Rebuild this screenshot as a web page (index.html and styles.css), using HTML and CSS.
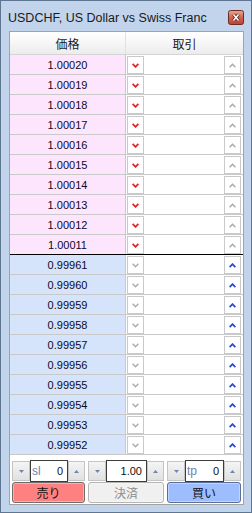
FILE: index.html
```html
<!DOCTYPE html>
<html lang="ja">
<head>
<meta charset="utf-8">
<title>USDCHF</title>
<link rel="stylesheet" href="styles.css">
</head>
<body>
<div class="window">
  <div class="titlebar">
    <span class="title">USDCHF, US Dollar vs Swiss Franc</span>
    <span class="close">
      <svg width="16" height="15" viewBox="0 0 16 15">
        <defs>
          <linearGradient id="cg" x1="0" y1="0" x2="0" y2="1">
            <stop offset="0" stop-color="#e9a996"/>
            <stop offset="0.5" stop-color="#d0644f"/>
            <stop offset="1" stop-color="#c0402f"/>
          </linearGradient>
        </defs>
        <rect x="0.5" y="0.5" width="15" height="14" rx="2" fill="url(#cg)" stroke="#6a2c25"/>
        <path d="M5.5 4.5 L10.5 10.5 M10.5 4.5 L5.5 10.5" stroke="#5a2018" stroke-width="3.2"/>
        <path d="M5.5 4.5 L10.5 10.5 M10.5 4.5 L5.5 10.5" stroke="#ffffff" stroke-width="1.6"/>
      </svg>
    </span>
  </div>
  <div class="panel">
    <div class="grid">
      <div class="head"><div class="c1">価格</div><div class="c2">取引</div></div>

      <div class="row ask"><div class="price">1.00020</div><div class="trade"><span class="tb dn on-red"></span><span class="tb up off"></span></div></div>
      <div class="row ask"><div class="price">1.00019</div><div class="trade"><span class="tb dn on-red"></span><span class="tb up off"></span></div></div>
      <div class="row ask"><div class="price">1.00018</div><div class="trade"><span class="tb dn on-red"></span><span class="tb up off"></span></div></div>
      <div class="row ask"><div class="price">1.00017</div><div class="trade"><span class="tb dn on-red"></span><span class="tb up off"></span></div></div>
      <div class="row ask"><div class="price">1.00016</div><div class="trade"><span class="tb dn on-red"></span><span class="tb up off"></span></div></div>
      <div class="row ask"><div class="price">1.00015</div><div class="trade"><span class="tb dn on-red"></span><span class="tb up off"></span></div></div>
      <div class="row ask"><div class="price">1.00014</div><div class="trade"><span class="tb dn on-red"></span><span class="tb up off"></span></div></div>
      <div class="row ask"><div class="price">1.00013</div><div class="trade"><span class="tb dn on-red"></span><span class="tb up off"></span></div></div>
      <div class="row ask"><div class="price">1.00012</div><div class="trade"><span class="tb dn on-red"></span><span class="tb up off"></span></div></div>
      <div class="row ask last"><div class="price">1.00011</div><div class="trade"><span class="tb dn on-red"></span><span class="tb up off"></span></div></div>

      <div class="row bid"><div class="price">0.99961</div><div class="trade"><span class="tb dn off"></span><span class="tb up on-blue"></span></div></div>
      <div class="row bid"><div class="price">0.99960</div><div class="trade"><span class="tb dn off"></span><span class="tb up on-blue"></span></div></div>
      <div class="row bid"><div class="price">0.99959</div><div class="trade"><span class="tb dn off"></span><span class="tb up on-blue"></span></div></div>
      <div class="row bid"><div class="price">0.99958</div><div class="trade"><span class="tb dn off"></span><span class="tb up on-blue"></span></div></div>
      <div class="row bid"><div class="price">0.99957</div><div class="trade"><span class="tb dn off"></span><span class="tb up on-blue"></span></div></div>
      <div class="row bid"><div class="price">0.99956</div><div class="trade"><span class="tb dn off"></span><span class="tb up on-blue"></span></div></div>
      <div class="row bid"><div class="price">0.99955</div><div class="trade"><span class="tb dn off"></span><span class="tb up on-blue"></span></div></div>
      <div class="row bid"><div class="price">0.99954</div><div class="trade"><span class="tb dn off"></span><span class="tb up on-blue"></span></div></div>
      <div class="row bid"><div class="price">0.99953</div><div class="trade"><span class="tb dn off"></span><span class="tb up on-blue"></span></div></div>
      <div class="row bid"><div class="price">0.99952</div><div class="trade"><span class="tb dn off"></span><span class="tb up on-blue"></span></div></div>
    </div>

    <div class="controls">
      <div class="spins">
        <div class="spin">
          <span class="sb sdn"></span>
          <span class="field"><span class="lbl">sl</span><span class="val">0</span></span>
          <span class="sb sup"></span>
        </div>
        <div class="spin">
          <span class="sb sdn"></span>
          <span class="field"><span class="lbl"></span><span class="val">1.00</span></span>
          <span class="sb sup"></span>
        </div>
        <div class="spin">
          <span class="sb sdn"></span>
          <span class="field"><span class="lbl">tp</span><span class="val">0</span></span>
          <span class="sb sup"></span>
        </div>
      </div>
      <div class="actions">
        <span class="act sell">売り</span>
        <span class="act close-pos">決済</span>
        <span class="act buy">買い</span>
      </div>
    </div>
  </div>
</div>
</body>
</html>
```
FILE: styles.css
```css
* { box-sizing: border-box; }
html, body { margin: 0; padding: 0; }
body { width: 252px; height: 513px; background: #c1d4ec; }

.window {
  width: 252px;
  height: 513px;
  border: 1px solid #5f7693;
  background: #c1d4ec;
  display: flex;
  flex-direction: column;
}

.titlebar {
  height: 30px;
  flex: none;
  display: flex;
  justify-content: space-between;
  align-items: flex-start;
  padding: 0 7px 0 7px;
}
.title {
  font-family: "Liberation Sans", Arial, sans-serif;
  font-size: 12.5px;
  line-height: 16px;
  padding-top: 9px;
  color: #1a1a1a;
  white-space: nowrap;
}
.close { margin-top: 9px; width: 16px; height: 15px; display: block; }
.close svg { display: block; }

.panel {
  flex: 1;
  margin: 0 7px 7px 8px;
  background: #ffffff;
  border: 1px solid #a3a3a3;
  display: flex;
  flex-direction: column;
}

.grid { display: flex; flex-direction: column; }

.head {
  height: 23px;
  display: flex;
  border-bottom: 1px solid #d5d5d5;
  background: linear-gradient(#ffffff 0%, #f7f7f7 45%, #ececec 100%);
  font-family: "Noto Sans CJK JP", "Noto Sans", sans-serif;
  font-size: 12px;
  color: #1a1a1a;
}
.head .c1 {
  width: 116px;
  border-right: 1px solid #e2e2e2;
  display: flex; align-items: center; justify-content: center;
}
.head .c2 {
  flex: 1;
  display: flex; align-items: center; justify-content: center;
}

.row {
  height: 20px;
  display: flex;
  border-bottom: 1px solid #c9c9c9;
}
.row.last { border-bottom-color: #000000; }

.price {
  width: 116px;
  border-right: 1px solid #c9c9c9;
  display: flex; align-items: center; justify-content: center;
  font-family: "Liberation Sans", Arial, sans-serif;
  font-size: 11px;
  color: #0a0a28;
}
.ask .price { background: #fee5fe; }
.bid .price { background: #d5e4fa; }

.trade {
  flex: 1;
  display: flex;
  justify-content: space-between;
  align-items: flex-start;
  padding: 1px 2px 0 1px;
  background: #ffffff;
}
.tb {
  width: 17px;
  height: 18px;
  border: 1px solid #c9c9c9;
  background: #ffffff;
  display: block;
  background-repeat: no-repeat;
  background-position: center;
}
.tb.dn.on-red {
  background-image: url("data:image/svg+xml,%3Csvg xmlns='http://www.w3.org/2000/svg' width='7' height='5'%3E%3Cpolyline points='0.6,0.8 3.5,3.8 6.4,0.8' fill='none' stroke='%23e0242c' stroke-width='1.8'/%3E%3C/svg%3E");
}
.tb.dn.off {
  background-image: url("data:image/svg+xml,%3Csvg xmlns='http://www.w3.org/2000/svg' width='7' height='5'%3E%3Cpolyline points='0.6,0.8 3.5,3.8 6.4,0.8' fill='none' stroke='%23a9a9a9' stroke-width='1.4'/%3E%3C/svg%3E");
}
.tb.up.off {
  background-image: url("data:image/svg+xml,%3Csvg xmlns='http://www.w3.org/2000/svg' width='7' height='5'%3E%3Cpolyline points='0.6,4.2 3.5,1.2 6.4,4.2' fill='none' stroke='%23a9a9a9' stroke-width='1.4'/%3E%3C/svg%3E");
}
.tb.up.on-blue {
  background-image: url("data:image/svg+xml,%3Csvg xmlns='http://www.w3.org/2000/svg' width='7' height='5'%3E%3Cpolyline points='0.6,4.2 3.5,1.2 6.4,4.2' fill='none' stroke='%232848d8' stroke-width='1.8'/%3E%3C/svg%3E");
}

.controls {
  padding: 5px 2px 1px 2px;
  display: flex;
  flex-direction: column;
}
.spins, .actions {
  display: grid;
  grid-template-columns: 73px 76px 74px;
  column-gap: 3px;
}
.spins { height: 22px; }
.spin { display: flex; align-items: center; }
.sb {
  width: 18px;
  height: 20px;
  flex: none;
  border: 1px solid #c4c4c4;
  background-color: #e9e9e9;
  background-image: url("data:image/svg+xml,%3Csvg xmlns='http://www.w3.org/2000/svg' width='5' height='3'%3E%3Cpolygon points='0,0 5,0 2.5,3' fill='%236f83b0'/%3E%3C/svg%3E"), linear-gradient(#f4f4f4, #e1e1e1);
  background-repeat: no-repeat;
  background-position: center;
}
.sb.sup {
  width: 17px;
  background-image: url("data:image/svg+xml,%3Csvg xmlns='http://www.w3.org/2000/svg' width='5' height='3'%3E%3Cpolygon points='0,3 5,3 2.5,0' fill='%236f83b0'/%3E%3C/svg%3E"), linear-gradient(#f4f4f4, #e1e1e1);
}
.field {
  flex: 1;
  height: 22px;
  border: 1px solid #3c3c3c;
  background: #ffffff;
  display: flex;
  align-items: center;
  justify-content: space-between;
  padding: 0 4px 0 1px;
  font-family: "Liberation Sans", Arial, sans-serif;
  font-size: 11px;
  color: #111111;
}
.lbl { color: #6d7fb0; font-size: 12px; }

.actions { height: 21px; }
.act {
  display: flex;
  align-items: center;
  justify-content: center;
  height: 21px;
  border: 1px solid #6e6e6e;
  border-radius: 3px;
  font-family: "Noto Sans CJK JP", "Noto Sans", sans-serif;
  font-size: 12px;
  color: #111111;
  box-shadow: inset 0 0 0 1px rgba(255,255,255,0.35);
}
.sell { background: #ff8080; }
.close-pos { background: #f0f0f0; color: #8c8c8c; border-color: #b5b5b5; }
.buy { background: #9dbdff; border-color: #5c6f9a; }
```
